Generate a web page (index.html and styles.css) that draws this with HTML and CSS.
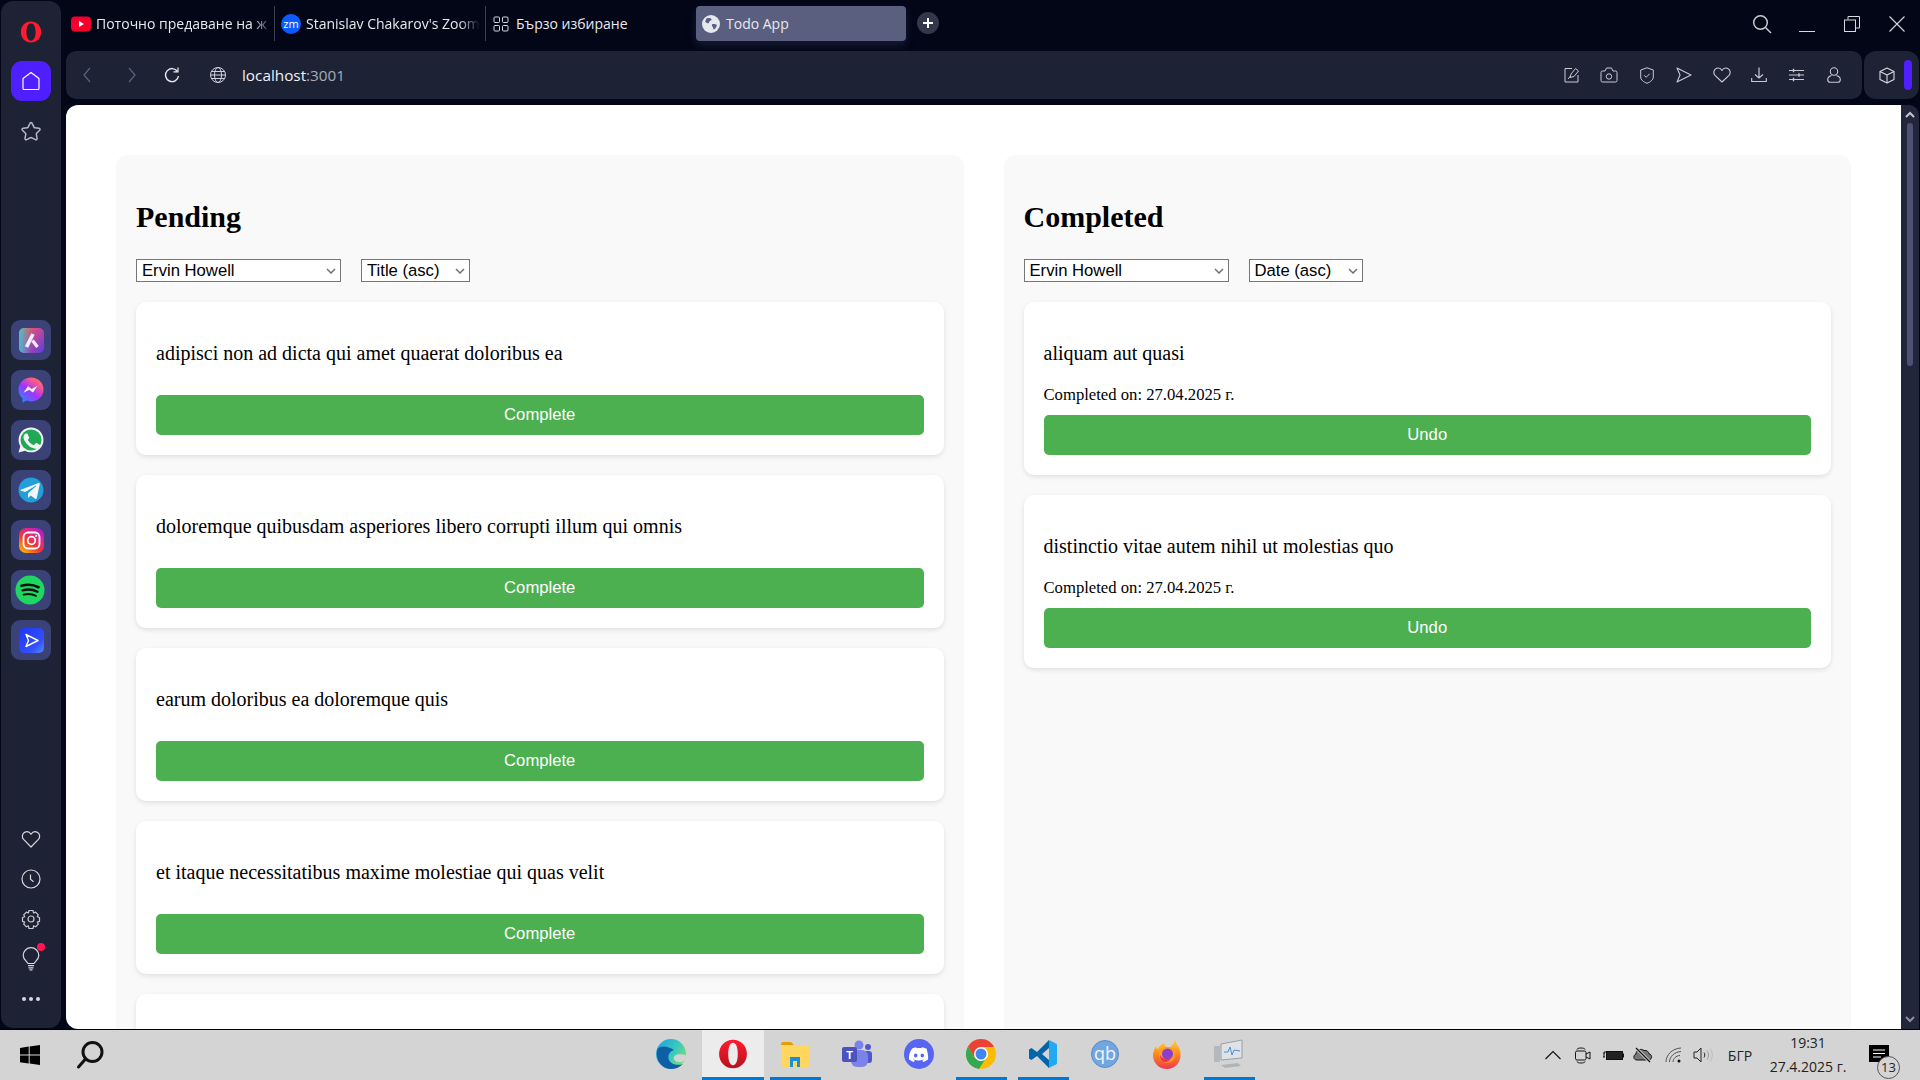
FILE: index.html
```html
<!DOCTYPE html>
<html lang="en">
<head>
    <meta charset="UTF-8">
    <meta name="viewport" content="width=device-width, initial-scale=1.0">
    <title>Todo App</title>
    <link rel="stylesheet" href="styles.css">
</head>
<body>
    <svg class="defs" width="0" height="0">
        <defs>
            <linearGradient id="grad-aria" x1="0" y1="0" x2="1" y2="1">
                <stop offset="0" stop-color="#f0703a"/>
                <stop offset="0.45" stop-color="#c0479a"/>
                <stop offset="1" stop-color="#5a3fe0"/>
            </linearGradient>
            <linearGradient id="grad-aria2" x1="0" y1="0" x2="1" y2="0">
                <stop offset="0" stop-color="#38c6d8" stop-opacity="0.9"/>
                <stop offset="0.5" stop-color="#38c6d8" stop-opacity="0"/>
            </linearGradient>
            <linearGradient id="grad-msg" x1="0.1" y1="1" x2="0.9" y2="0">
                <stop offset="0" stop-color="#1e90ff"/>
                <stop offset="0.45" stop-color="#a033ff"/>
                <stop offset="0.8" stop-color="#ff5c87"/>
                <stop offset="1" stop-color="#ff7a5c"/>
            </linearGradient>
            <linearGradient id="grad-insta" x1="0.1" y1="1" x2="0.9" y2="0">
                <stop offset="0" stop-color="#ffc107"/>
                <stop offset="0.4" stop-color="#f5372f"/>
                <stop offset="0.75" stop-color="#d6249f"/>
                <stop offset="1" stop-color="#9b1fd0"/>
            </linearGradient>
            <linearGradient id="grad-player" x1="0" y1="0" x2="1" y2="1">
                <stop offset="0" stop-color="#1d35f0"/>
                <stop offset="0.7" stop-color="#3350ff"/>
                <stop offset="1" stop-color="#5a8cf0"/>
            </linearGradient>
            <linearGradient id="grad-edge" x1="0" y1="0" x2="1" y2="0.6">
                <stop offset="0" stop-color="#1f9fe0"/>
                <stop offset="0.6" stop-color="#36c8c0"/>
                <stop offset="1" stop-color="#7ade78"/>
            </linearGradient>
            <linearGradient id="grad-opera" x1="0" y1="0" x2="0" y2="1">
                <stop offset="0" stop-color="#ff1b2d"/>
                <stop offset="1" stop-color="#b5121f"/>
            </linearGradient>
            <linearGradient id="grad-fox" x1="0.5" y1="0" x2="0.5" y2="1">
                <stop offset="0" stop-color="#ffd43b"/>
                <stop offset="0.5" stop-color="#ff8a1e"/>
                <stop offset="1" stop-color="#f0364e"/>
            </linearGradient>
        </defs>
    </svg>

    <div class="browser">
        <aside class="sidebar">
            <div class="side-logo">
                <svg width="22" height="22" viewBox="0 0 22 22"><path fill="#ff1b2d" fill-rule="evenodd" d="M11 .5C5 .5.8 5.200.8 11S5 21.500 11 21.500 21.200 16.800 21.200 11 17 .5 11 .5zm0 1.700c2.800 0 4.600 4 4.600 8.800s-1.800 8.800-4.600 8.800-4.600-4-4.600-8.800S8.200 2.200 11 2.200z"/></svg>
            </div>
            <div class="side-home">
                <svg width="20" height="20" viewBox="0 0 20 20" fill="none" stroke="#fff" stroke-width="1.200"><path d="M10 1.500 18 7.500V17.500a1 1 0 0 1-1 1H3a1 1 0 0 1-1-1V7.500z" stroke-linejoin="round"/></svg>
            </div>
            <div class="side-slot">
                <svg width="22" height="22" viewBox="0 0 22 22" fill="none" stroke="#b4b8c6" stroke-width="1.500" stroke-linejoin="round"><path d="M11 2.500c.5 0 .9.300 1.100.800l1.900 3.900c.1.300.4.500.700.500l4.300.6c1 .2 1.400 1.300.7 2l-3.100 3c-.2.200-.3.500-.3.800l.8 4.300c.2 1-.9 1.700-1.700 1.300l-3.900-2c-.3-.1-.6-.1-.9 0l-3.900 2c-.8.400-1.900-.3-1.700-1.300l.8-4.300c0-.3-.1-.6-.3-.8l-3.100-3c-.7-.7-.3-1.800.7-2l4.300-.6c.3 0 .6-.2.700-.5l1.900-3.900c.2-.5.600-.8 1.100-.8z"/></svg>
            </div>

            <div class="side-apps">
                <div class="app-tile">
                    <svg width="25" height="25" viewBox="0 0 25 25"><rect width="25" height="25" rx="5" fill="url(#grad-aria)"/><rect width="25" height="25" rx="5" fill="url(#grad-aria2)"/><path d="M14 6 7.500 19" stroke="#eef" stroke-width="3.600" fill="none"/><path d="M13.500 12.500 18.500 19" stroke="#eef" stroke-width="3.200" fill="none"/></svg>
                </div>
                <div class="app-tile">
                    <svg width="26" height="26" viewBox="0 0 26 26"><path fill="url(#grad-msg)" d="M13 .5C6 .5.5 5.600.5 12.500c0 3.700 1.500 6.800 4 9v4.200l3.900-2.100c1.400.5 3 .8 4.600.8 7 0 12.500-5.100 12.500-11.900S20 .5 13 .5z"/><path fill="#fff" d="M5.500 15.800 10 9.200l3.600 2.700 5.800-2.900-4.500 6.500-3.600-2.700z"/></svg>
                </div>
                <div class="app-tile">
                    <svg width="26" height="26" viewBox="0 0 26 26"><path fill="#f2f4f4" d="M13 .5C6.100.5.600 6 .600 12.900c0 2.300.6 4.400 1.700 6.300L.5 25.500l6.500-1.700c1.800 1 3.900 1.500 6 1.500 6.900 0 12.500-5.500 12.500-12.400S19.900.5 13 .5z"/><circle cx="13" cy="13" r="10.500" fill="#1fa855"/><path fill="#f2f4f4" d="M9.700 7.300c-.3-.7-.6-.7-.9-.7h-.8c-.3 0-.7.100-1.100.5-.4.400-1.400 1.400-1.400 3.400s1.500 3.900 1.700 4.200c.2.300 2.800 4.500 7 6.100 3.400 1.300 4.100.9 4.900.9.700-.1 2.400-1 2.700-1.900.3-.9.300-1.700.2-1.900-.1-.2-.4-.3-.8-.5l-2.700-1.300c-.4-.1-.6-.2-.9.200l-1.300 1.500c-.2.300-.5.300-.9.100-.4-.2-1.700-.6-3.200-2-1.200-1-2-2.300-2.200-2.700-.2-.4 0-.6.200-.8l.6-.7c.2-.2.200-.4.400-.6.100-.3.100-.5 0-.7z"/></svg>
                </div>
                <div class="app-tile">
                    <svg width="26" height="26" viewBox="0 0 26 26"><circle cx="13" cy="13" r="12.500" fill="#229ed9"/><path fill="#f2f6fa" d="M3.500 12.600 20.500 6c.8-.3 1.500.2 1.200 1.400l-2.900 13.500c-.2 1-.8 1.200-1.600.8l-4.400-3.300-2.100 2c-.3.300-.5.400-.9.400l.3-4.500 8.200-7.400c.4-.3-.1-.5-.6-.2L7.200 15l-4.300-1.300c-.9-.3-.9-.9.600-1.100z"/></svg>
                </div>
                <div class="app-tile">
                    <svg width="25" height="25" viewBox="0 0 25 25"><rect width="25" height="25" rx="7" fill="url(#grad-insta)"/><rect x="4.500" y="4.500" width="16" height="16" rx="4.500" fill="none" stroke="#fff" stroke-width="1.800"/><circle cx="12.500" cy="12.500" r="3.800" fill="none" stroke="#fff" stroke-width="1.800"/><circle cx="17.200" cy="7.800" r="1.100" fill="#fff"/></svg>
                </div>
                <div class="app-tile">
                    <svg class="spotify" width="30" height="30" viewBox="0 0 30 30"><circle cx="15" cy="15" r="14.500" fill="#1ed760"/><g fill="none" stroke="#111" stroke-linecap="round"><path d="M6.500 10.800c5.500-1.600 12-1.200 17 1.400" stroke-width="2.700"/><path d="M7.500 15.300c5-1.300 10.500-.9 15 1.500" stroke-width="2.300"/><path d="M8.500 19.600c4.300-1 8.700-.7 12.500 1.300" stroke-width="1.900"/></g></svg>
                </div>
                <div class="app-tile">
                    <svg width="25" height="25" viewBox="0 0 25 25"><rect width="25" height="25" rx="5" fill="url(#grad-player)"/><path d="M7 6.500 19 12.500 7 18.500 9.500 12.500z" fill="none" stroke="#fff" stroke-width="1.400" stroke-linejoin="round"/></svg>
                </div>
            </div>

            <div class="side-bottom">
                <div class="side-slot">
                    <svg width="20" height="20" viewBox="0 0 20 20" fill="none" stroke="#d6d8e0" stroke-width="1.200"><path d="M10 18 2.600 10.400C.4 8 1.200 4.200 4 3.100 6.300 2.200 8.700 3.200 10 5.300 11.300 3.200 13.700 2.200 16 3.100c2.800 1.100 3.600 4.900 1.400 7.300z" stroke-linejoin="round"/></svg>
                </div>
                <div class="side-slot">
                    <svg width="20" height="20" viewBox="0 0 20 20" fill="none" stroke="#d6d8e0" stroke-width="1.200"><circle cx="10" cy="10" r="9"/><path d="M9.500 5.500v4.700l3 2.600"/></svg>
                </div>
                <div class="side-slot">
                    <svg width="20" height="20" viewBox="0 0 20 20" fill="none" stroke="#c8cad4" stroke-width="1.200" stroke-linejoin="round"><path d="M8 1.500h4l.6 2.500 2-.9 2.700 2.700-1 2 2.200 .7v3.900l-2.200.7 1 2-2.700 2.700-2-1-.6 2.700H8l-.6-2.700-2 1-2.700-2.700 1-2-2.200-.7V8.500l2.200-.7-1-2 2.700-2.700 2 .9z"/><circle cx="10" cy="10" r="3"/></svg>
                </div>
                <div class="side-slot">
                    <span class="bulb">
                        <svg width="18" height="24" viewBox="0 0 18 24" fill="none" stroke="#d6d8e0" stroke-width="1.200"><path d="M6 16.500c-.5-2-4.800-3.500-4.800-8a7.800 7.800 0 0 1 15.600 0c0 4.500-4.300 6-4.800 8z"/><path d="M6 18.700h6M6.500 20.800h5M7.500 22.800h3"/></svg>
                        <i class="bulb-dot"></i>
                    </span>
                </div>
                <div class="side-slot side-dots"><i></i><i></i><i></i></div>
            </div>
        </aside>

        <div class="window">
            <div class="tabs">
                <div class="tab tab-yt">
                    <svg width="20" height="16" viewBox="0 0 20 16"><rect width="20" height="15" y=".5" rx="4" fill="#f5002d"/><path d="M8 5v6l5-3z" fill="#fff"/></svg>
                    <span class="tab-text">Поточно предаване на ж</span>
                </div>
                <div class="tab tab-zoom">
                    <span class="zm-icon">zm</span>
                    <span class="tab-text">Stanislav Chakarov's Zoom</span>
                </div>
                <div class="tab tab-speed">
                    <svg width="16" height="16" viewBox="0 0 16 16" fill="none" stroke="#d8dae2" stroke-width="1"><rect x="1" y="1" width="5.500" height="5.500" rx="1"/><rect x="9.500" y="1" width="5.500" height="5.500" rx="1"/><rect x="1" y="9.500" width="5.500" height="5.500" rx="1"/><rect x="9.500" y="9.500" width="5.500" height="5.500" rx="1"/></svg>
                    <span>Бързо избиране</span>
                </div>
                <div class="tab tab-active">
                    <svg width="18" height="18" viewBox="0 0 18 18"><circle cx="9" cy="9" r="9" fill="#e6e8ef"/><path fill="#5b6080" d="M4.500 3.500c2-.8 4-.3 5 .5.500 1-.8 1.800-1.800 2.300-.9.600-.3 1.700-1.300 2-1 .2-2.300-.5-3.200-1.500.3-1.200.8-2.300 1.300-3.300zM10.500 9c1.500-.2 3.500.2 4.300 1-.2 2-1.300 3.600-3 4.600-.8-.8-.5-2-1.200-2.800C9.800 11 9.500 9.500 10.500 9z"/></svg>
                    <span>Todo App</span>
                </div>
                <div class="tab-add">
                    <svg width="12" height="12" viewBox="0 0 12 12"><path d="M6 1v10M1 6h10" stroke="#fff" stroke-width="2"/></svg>
                </div>
                <div class="window-controls">
                    <span class="win-btn win-search">
                        <svg width="20" height="20" viewBox="0 0 20 20" fill="none" stroke="#c8cad0" stroke-width="1.500"><circle cx="8.500" cy="8.500" r="6.800"/><path d="M13.500 13.500 19 19"/></svg>
                    </span>
                    <span class="win-btn">
                        <svg width="16" height="16" viewBox="0 0 16 16" stroke="#d8dae0"><path d="M0 15.500h16"/></svg>
                    </span>
                    <span class="win-btn">
                        <svg width="16" height="16" viewBox="0 0 16 16" fill="none" stroke="#d8dae0"><rect x=".5" y="4" width="11" height="11.500"/><path d="M4 3.500V.5h11.500V12H12"/></svg>
                    </span>
                    <span class="win-btn">
                        <svg width="16" height="16" viewBox="0 0 16 16" stroke="#d8dae0" stroke-width="1.100"><path d="M.5.5l15 15M15.500.5l-15 15"/></svg>
                    </span>
                </div>
            </div>

            <div class="toolbar">
                <div class="address">
                    <span class="nav-btn nav-back">
                        <svg width="10" height="16" viewBox="0 0 10 16" fill="none" stroke="#5c6378" stroke-width="1.200"><path d="M8 1 2 8l6 7"/></svg>
                    </span>
                    <span class="nav-btn nav-forward">
                        <svg width="10" height="16" viewBox="0 0 10 16" fill="none" stroke="#5c6378" stroke-width="1.200"><path d="M2 1l6 7-6 7"/></svg>
                    </span>
                    <span class="nav-btn nav-reload">
                        <svg width="16" height="16" viewBox="0 0 16 16" fill="none" stroke="#e8e9ee" stroke-width="1.400"><path d="M13.500 4.500A6.500 6.500 0 1 0 14.500 9"/><path d="M9.500 4.800h4.500V.5" stroke-width="1.200"/></svg>
                    </span>
                    <span class="nav-btn nav-globe">
                        <svg width="16" height="16" viewBox="0 0 16 16" fill="none" stroke="#cfd1da" stroke-width="1"><circle cx="8" cy="8" r="7.500"/><ellipse cx="8" cy="8" rx="3.500" ry="7.500"/><path d="M.5 8h15M1.500 4.500h13M1.500 11.500h13"/></svg>
                    </span>
                    <span class="url">localhost<span class="url-port">:3001</span></span>
                    <div class="page-actions">
                        <span class="act">
                            <svg width="16" height="16" viewBox="0 0 16 16" fill="none" stroke="#c8cad4" stroke-width="1"><path d="M8 1.500H1v13.500h13V8"/><path d="M6 10.500 7 7l4.500-5.500 3 2.500L10 9.500z" stroke-linejoin="round"/><path d="M6.500 9 4 12"/></svg>
                        </span>
                        <span class="act">
                            <svg width="18" height="16" viewBox="0 0 18 16" fill="none" stroke="#c8cad4" stroke-width="1"><path d="M1 5.500a1.500 1.500 0 0 1 1.500-1.500H5l1.500-3h5L13 4h2.500A1.500 1.500 0 0 1 17 5.500v8a1.500 1.500 0 0 1-1.500 1.500h-13A1.500 1.500 0 0 1 1 13.500z"/><circle cx="9" cy="9.500" r="2.700"/></svg>
                        </span>
                        <span class="act">
                            <svg width="14" height="17" viewBox="0 0 14 17" fill="none" stroke="#c8cad4" stroke-width="1"><path d="M7 .8 13.300 3v7c0 3-3 5-6.300 6.300C3.700 15 .7 13 .7 10V3z" stroke-linejoin="round"/><path d="M4.200 8.300l2 2 3.600-3.600"/></svg>
                        </span>
                        <span class="act">
                            <svg width="16" height="16" viewBox="0 0 16 16" fill="none" stroke="#c8cad4" stroke-width="1.100" stroke-linejoin="round"><path d="M1 1 15 8 1 15 4 8z"/></svg>
                        </span>
                        <span class="act">
                            <svg width="18" height="16" viewBox="0 0 18 16" fill="none" stroke="#c8cad4" stroke-width="1.100" stroke-linejoin="round"><path d="M9 15 2 8.300C-.2 5.800 1 2 3.700 1.200 5.800.6 8 1.500 9 3.500 10 1.500 12.200.6 14.300 1.200 17 2 18.200 5.800 16 8.300z"/></svg>
                        </span>
                        <span class="act">
                            <svg width="16" height="16" viewBox="0 0 16 16" fill="none" stroke="#c8cad4" stroke-width="1.200"><path d="M8 .5v10.500M4 7.500 8 11l4-3.500"/><path d="M.7 11v3.500h14.600V11" stroke-width="1.100"/></svg>
                        </span>
                        <span class="act">
                            <svg width="15" height="14" viewBox="0 0 15 14" fill="none" stroke="#c8cad4" stroke-width="1.100"><path d="M0 2.500h15M0 7h15M0 11.500h15"/><path d="M4.500 .7v3.600M10 5.200v3.600M4.500 9.700v3.600" stroke-width="1.400"/></svg>
                        </span>
                        <span class="act">
                            <svg width="14" height="16" viewBox="0 0 14 16" fill="none" stroke="#c8cad4" stroke-width="1.100"><circle cx="7" cy="4.500" r="3.700"/><path d="M4.500 8.500C2 9.300.7 10.800.7 12.500c0 1.500 1 2.800 2.500 2.800h7.600c1.500 0 2.500-1.300 2.500-2.800 0-1.700-1.300-3.200-3.800-4"/></svg>
                        </span>
                    </div>
                </div>
                <div class="box-btn">
                    <svg width="16" height="17" viewBox="0 0 16 17" fill="none" stroke="#d8dae2" stroke-width="1.100" stroke-linejoin="round"><path d="M8 1 15 4.500v8L8 16 1 12.500v-8z"/><path d="M1 4.500 8 8l7-3.500M8 8v8"/></svg>
                    <i class="box-bar"></i>
                </div>
            </div>

            <div class="viewport">
                <main class="page">
                    <div class="todo-grid">
                        <section class="column">
                            <h2>Pending</h2>
                            <div class="filters">
                                <select class="user-select"><option>Ervin Howell</option></select>
                                <select class="sort-title"><option>Title (asc)</option></select>
                            </div>
                            <div class="card">
                                <p>adipisci non ad dicta qui amet quaerat doloribus ea</p>
                                <button>Complete</button>
                            </div>
                            <div class="card">
                                <p>doloremque quibusdam asperiores libero corrupti illum qui omnis</p>
                                <button>Complete</button>
                            </div>
                            <div class="card">
                                <p>earum doloribus ea doloremque quis</p>
                                <button>Complete</button>
                            </div>
                            <div class="card">
                                <p>et itaque necessitatibus maxime molestiae qui quas velit</p>
                                <button>Complete</button>
                            </div>
                            <!-- next card is below the fold, only its top edge shows -->
                            <div class="card card-next"></div>
                        </section>
                        <section class="column">
                            <h2>Completed</h2>
                            <div class="filters">
                                <select class="user-select"><option>Ervin Howell</option></select>
                                <select class="sort-date"><option>Date (asc)</option></select>
                            </div>
                            <div class="card">
                                <p class="has-date">aliquam aut quasi</p>
                                <p class="done-date">Completed on: 27.04.2025 г.</p>
                                <button>Undo</button>
                            </div>
                            <div class="card">
                                <p class="has-date">distinctio vitae autem nihil ut molestias quo</p>
                                <p class="done-date">Completed on: 27.04.2025 г.</p>
                                <button>Undo</button>
                            </div>
                        </section>
                    </div>
                </main>
                <div class="scrollbar">
                    <svg width="10" height="7" viewBox="0 0 10 7" fill="none" stroke="#c4c6d2" stroke-width="2"><path d="M1 6l4-4 4 4"/></svg>
                    <div class="scroll-track"><div class="scroll-thumb"></div></div>
                    <svg width="10" height="7" viewBox="0 0 10 7" fill="none" stroke="#8d90a2" stroke-width="2"><path d="M1 1l4 4 4-4"/></svg>
                </div>
            </div>
        </div>
    </div>

    <footer class="taskbar">
        <div class="task-start">
            <svg width="20" height="20" viewBox="0 0 20 20" fill="#000"><path d="M0 2.900 8.700 1.600v8H0zM9.700 1.500 20 0v9.600H9.700zM0 10.500h8.700v8L0 17.200zM9.700 10.500H20V20L9.700 18.600z"/></svg>
        </div>
        <div class="task-search">
            <svg width="28" height="30" viewBox="0 0 28 30" fill="none" stroke="#111" stroke-width="3"><circle cx="16.500" cy="12" r="9.500"/><path d="M9.500 19 2.500 27" stroke-linecap="round"/></svg>
        </div>

        <div class="task-apps">
            <span class="task-app app-edge">
                <svg width="30" height="30" viewBox="0 0 30 30"><circle cx="15" cy="15" r="15" fill="url(#grad-edge)"/><path fill="#0f5fa8" d="M1.500 10C-1.500 21 6 30 15 30c5 0 9-2 12-5-5 2-12 .5-14-4-2-5 1-9 5-10-6-4-13-5-16.500-1z"/><path fill="#d4d4d4" d="M30 16.500c-3-1.500-9-2-11.500.5-2 2.500 0 5.500 3.500 6 3 .4 5-.3 6.500-1.500 1-1.500 1.300-3.200 1.500-5z"/></svg>
            </span>
            <span class="task-app app-opera">
                <svg width="30" height="30" viewBox="0 0 22 22"><path fill="url(#grad-opera)" fill-rule="evenodd" d="M11 .5C5 .5.8 5.200.8 11S5 21.500 11 21.500 21.200 16.800 21.200 11 17 .5 11 .5zm0 2.300c2.400 0 3.500 3.700 3.500 8.200s-1.100 8.200-3.500 8.200-3.500-3.700-3.500-8.200S8.600 2.800 11 2.800z"/></svg>
            </span>
            <span class="task-app running">
                <svg width="28" height="28" viewBox="0 0 28 28"><path d="M0 4a2 2 0 0 1 2-2h8l3 3H0z" fill="#e0a100"/><rect y="5" width="28" height="22" rx="2" fill="#ffd75e"/><path d="M9 27V17h10v10h-3v-6h-4v6z" fill="#1d8fd8"/></svg>
            </span>
            <span class="task-app">
                <svg width="30" height="30" viewBox="0 0 30 30"><circle cx="17" cy="6" r="4.500" fill="#7b83eb"/><circle cx="26" cy="8" r="3" fill="#5059c9"/><rect x="21" y="12" width="9" height="12" rx="3" fill="#5059c9"/><rect x="9" y="11" width="17" height="17" rx="6" fill="#7b83eb"/><rect y="8" width="15" height="15" rx="2" fill="#4b53bc"/><text x="7.500" y="20" class="teams-t">T</text></svg>
            </span>
            <span class="task-app">
                <svg width="30" height="30" viewBox="0 0 30 30"><circle cx="15" cy="15" r="15" fill="#5865f2"/><path fill="#fff" d="M22 9.500a16 16 0 0 0-4-1.300l-.5 1c-1.600-.2-3.200-.2-4.900 0l-.5-1a16 16 0 0 0-4 1.300C5.400 13.300 4.700 17 5 20.600c1.700 1.200 3.300 2 4.900 2.500l1-1.600c-.6-.2-1.100-.5-1.600-.8l.4-.3c3.200 1.500 6.600 1.500 9.700 0l.4.300c-.5.300-1 .6-1.600.8l1 1.600c1.600-.5 3.300-1.300 4.900-2.500.4-4.200-.7-7.800-1.600-11.100zM11.700 18.500c-1 0-1.700-.9-1.700-2s.8-2 1.700-2c1 0 1.800.9 1.700 2 0 1.100-.7 2-1.700 2zm6.600 0c-1 0-1.700-.9-1.700-2s.8-2 1.700-2c1 0 1.800.9 1.700 2 0 1.100-.7 2-1.700 2z"/></svg>
            </span>
            <span class="task-app running">
                <svg width="30" height="30" viewBox="0 0 30 30"><circle cx="15" cy="15" r="15" fill="#fbbc04"/><path d="M15 0a15 15 0 0 0-13 7.500L8 18 15 8h13A15 15 0 0 0 15 0z" fill="#ea4335"/><path d="M2 7.500A15 15 0 0 0 13 30l6-9.500-11-2.500z" fill="#34a853"/><circle cx="15" cy="15" r="7" fill="#fff"/><circle cx="15" cy="15" r="5.500" fill="#4285f4"/></svg>
            </span>
            <span class="task-app running">
                <svg width="30" height="30" viewBox="0 0 30 30"><path fill="#0065a9" d="M21 1 9 13 3.500 9 1 10.500v9L3.500 21 9 17l12 12 0-8-7-6 7-6z"/><path fill="#23a9f2" d="M21 1l7 3.500a2 2 0 0 1 1 1.500v18a2 2 0 0 1-1 1.500L21 29z"/></svg>
            </span>
            <span class="task-app">
                <svg width="28" height="28" viewBox="0 0 28 28"><circle cx="14" cy="14" r="13.500" fill="#72a6e0" stroke="#5a8cc8"/><text x="14" y="20" class="qb-text">qb</text></svg>
            </span>
            <span class="task-app">
                <svg width="28" height="30" viewBox="0 0 28 30"><path fill="url(#grad-fox)" d="M22 0c1 3 1 5 3 7 3 5 3 10 2 13-1.500 6-7 10-13 10C6 30 0 24 0 16 0 12 2 9 3 7c0 2 1 3 2 3 1-3 4-5 7-6-1 2 0 3 2 4 3 .5 6 0 8-8z"/><circle cx="14" cy="16" r="8" fill="#ff9a24"/><circle cx="14.500" cy="15" r="5.500" fill="#8a3fd0"/><path fill="#f0364e" d="M7 16c2 4 7 5 11 3-2 3.500-4.500 4.500-7 4-2.500-.5-4-3.500-4-7z"/></svg>
            </span>
            <span class="task-app running">
                <svg width="32" height="30" viewBox="0 0 32 30"><path d="M8 5 29 1v18L8 21z" fill="#dfe3e8" stroke="#9aa0a6"/><path d="M11 13h4l2-5 2 8 2-5 6 1" fill="none" stroke="#4a8fd0"/><rect x="1" y="7" width="6" height="16" fill="#b4b8bc"/><path d="M8 26l17-2 3 3-16 2z" fill="#b0b4b8"/></svg>
            </span>
        </div>

        <div class="tray">
            <span class="tray-item">
                <svg width="16" height="10" viewBox="0 0 16 10" fill="none" stroke="#111" stroke-width="1.100"><path d="M.5 9 8 1.500 15.500 9"/></svg>
            </span>
            <span class="tray-item">
                <svg width="16" height="19" viewBox="0 0 16 19" fill="none" stroke="#111" stroke-width="1"><path d="M2 3.500C2 1.500 10 1.500 10 3.500M2 15.500c0 2 8 2 8 0"/><rect x=".5" y="5" width="10.500" height="9" rx="1.500"/><path d="M11 8l4-2v7l-4-2"/></svg>
            </span>
            <span class="tray-item">
                <svg width="21" height="12" viewBox="0 0 21 12"><path d="M0 4h2V2M1 4v4M0 8h2" fill="none" stroke="#111"/><rect x="3.500" y="2.500" width="16" height="8" fill="#222" stroke="#111"/><rect x="20" y="4.500" width="1" height="4" fill="#111"/></svg>
            </span>
            <span class="tray-item">
                <svg width="20" height="16" viewBox="0 0 20 16"><path d="M4 13c-4 0-4-5-1-6C3 3 8 1 11 3.500c3-.5 5 1.500 5 3.500 3 0 4 5 0 6z" fill="#777" stroke="#111"/><path d="M3 1l14 14" stroke="#d4d4d4" stroke-width="3"/><path d="M3 1l14 14" stroke="#111" stroke-width="1.200"/></svg>
            </span>
            <span class="tray-item">
                <svg width="17" height="16" viewBox="0 0 17 16" fill="none" stroke="#555"><path d="M1 15C1 8 7 1.500 16 1"/><path d="M4.500 15C4.500 10 9 5 16 4.500"/><path d="M8 15c0-3 3-6.500 7-6.500"/><circle cx="14" cy="14" r="1.500" fill="#111" stroke="none"/></svg>
            </span>
            <span class="tray-item">
                <svg width="21" height="16" viewBox="0 0 21 16" fill="none" stroke="#222"><path d="M1 5h3l4-4v14l-4-4H1z"/><path d="M11 5.500c1 1.500 1 3.500 0 5"/><path d="M14 3.500c2 2.500 2 6.500 0 9" stroke="#999"/><path d="M17 1.500c3 3.500 3 9.500 0 13" stroke="#bbb"/></svg>
            </span>
            <span class="tray-lang">БГР</span>
            <div class="clock">
                <span>19:31</span>
                <span>27.4.2025 г.</span>
            </div>
            <div class="notify">
                <svg width="20" height="17" viewBox="0 0 20 17"><path d="M0 0h20v17H0z" fill="#000"/><path d="M4 5h12M4 8.500h12M4 12h8" stroke="#fff"/></svg>
                <span class="notify-count">13</span>
            </div>
        </div>
    </footer>
</body>
</html>
```
FILE: styles.css
```css
* {
    box-sizing: border-box;
}
html, body {
    margin: 0;
    height: 1080px;
    overflow: hidden;
}
body {
    background: #020617;
    font-family: "Open Sans", "Noto Sans", sans-serif;
    color: #e8e9ee;
}
.defs {
    display: block;
    height: 0;
}
svg {
    display: block;
    flex: none;
}

/* browser frame */
.browser {
    display: flex;
    height: 1029px;
}
.sidebar {
    width: 60px;
    height: 1027px;
    margin: 1px 5px 0 1px;
    padding-top: 20px;
    background: #1e2235;
    border-radius: 12px;
    display: flex;
    flex-direction: column;
    align-items: center;
}
.side-logo {
    height: 22px;
    margin-bottom: 18px;
}
.side-home {
    width: 40px;
    height: 40px;
    background: #4f1fff;
    border-radius: 11px;
    display: flex;
    align-items: center;
    justify-content: center;
    margin-bottom: 10px;
}
.side-slot {
    height: 40px;
    width: 40px;
    display: flex;
    align-items: center;
    justify-content: center;
}
.side-apps {
    margin-top: 169px;
    display: flex;
    flex-direction: column;
    gap: 10px;
}
.app-tile {
    width: 40px;
    height: 40px;
    background: #3a4278;
    border-radius: 9px;
    display: flex;
    align-items: center;
    justify-content: center;
}
.spotify {
    margin-right: 2px;
}
.side-bottom {
    margin-top: auto;
    margin-bottom: 9px;
    display: flex;
    flex-direction: column;
}
.bulb {
    position: relative;
}
.bulb-dot {
    position: absolute;
    top: -4px;
    right: -5px;
    width: 8px;
    height: 8px;
    border-radius: 50%;
    background: #ff1654;
}
.side-dots {
    gap: 3px;
}
.side-dots i {
    width: 4px;
    height: 4px;
    border-radius: 50%;
    background: #d6d8e0;
}

.window {
    width: 1854px;
    display: flex;
    flex-direction: column;
}

/* tabs */
.tabs {
    height: 51px;
    padding-top: 6px;
    display: flex;
    align-items: flex-start;
    font-size: 14px;
}
.tab {
    height: 35px;
    display: flex;
    align-items: center;
    gap: 5px;
    white-space: nowrap;
}
.tab-text {
    overflow: hidden;
    flex: 1;
    -webkit-mask-image: linear-gradient(to right, #000 88%, transparent);
    mask-image: linear-gradient(to right, #000 88%, transparent);
}
.tab-yt {
    width: 209px;
    padding-left: 5px;
    border-right: 1px solid #3a3e50;
    margin-right: 6px;
}
.tab-zoom {
    width: 205px;
    border-right: 1px solid #3a3e50;
    margin-right: 7px;
    padding-right: 5px;
}
.zm-icon {
    width: 20px;
    height: 20px;
    border-radius: 50%;
    background: #0b5cff;
    color: #fff;
    font-size: 11px;
    line-height: 20px;
    text-align: center;
}
.tab-speed {
    width: 203px;
    gap: 7px;
}
.tab-active {
    width: 210px;
    background: #5a5f80;
    border-radius: 4px;
    padding-left: 6px;
    gap: 6px;
    box-shadow: 0 4px 10px rgba(90, 95, 128, 0.25);
}
.tab-add {
    width: 22px;
    height: 22px;
    margin: 6px 0 0 11px;
    border-radius: 50%;
    background: #33374a;
    display: flex;
    align-items: center;
    justify-content: center;
}
.window-controls {
    margin-left: auto;
    margin-right: 15px;
    height: 35px;
    display: flex;
    align-items: center;
    gap: 29px;
}
.win-btn {
    width: 16px;
    display: flex;
    justify-content: center;
}

/* address bar */
.toolbar {
    height: 48px;
    display: flex;
    gap: 2px;
    margin-bottom: 6px;
}
.address {
    width: 1796px;
    background: #1e2235;
    border-radius: 10px;
    display: flex;
    align-items: center;
    padding-left: 16px;
}
.nav-back {
    margin-right: 35px;
}
.nav-forward {
    margin-right: 27px;
}
.nav-reload {
    margin-right: 30px;
}
.nav-globe {
    margin-right: 16px;
}
.url {
    font-size: 15.300px;
    color: #f0f1f5;
}
.url-port {
    color: #a8abb8;
}
.page-actions {
    margin-left: auto;
    margin-right: 9px;
    display: flex;
    align-items: center;
}
.act {
    width: 37.500px;
    display: flex;
    justify-content: center;
}
.box-btn {
    width: 55px;
    background: #1e2235;
    border-radius: 12px;
    display: flex;
    align-items: center;
    padding-left: 15px;
    gap: 9px;
}
.box-bar {
    width: 8px;
    height: 30px;
    background: #4f1fff;
    border-radius: 4px;
}

/* page viewport */
.viewport {
    height: 924px;
    display: flex;
}
.page {
    flex: 1;
    background: #fff;
    border-radius: 12px 0 0 12px;
    padding: 50px 50px 0;
    overflow: hidden;
    color: #000;
    font-family: "Liberation Serif", "Times New Roman", serif;
    font-size: 20px;
}
.scrollbar {
    width: 18px;
    margin-right: 1px;
    background: #22263a;
    border-radius: 0 10px 0 0;
    padding: 6px 0 6px;
    display: flex;
    flex-direction: column;
    align-items: center;
}
.scroll-track {
    flex: 1;
    padding-top: 5px;
}
.scroll-thumb {
    width: 6px;
    height: 243px;
    background: #4e5272;
    border-radius: 3px;
}

/* todo columns */
.todo-grid {
    display: grid;
    grid-template-columns: 1fr 1fr;
    gap: 40px;
}
.column {
    background: #f9f9f9;
    border-radius: 12px;
    padding: 20px;
    min-height: 1200px;
}
h2 {
    font-size: 30px;
    margin: 25px 0;
    line-height: 34px;
}
.filters {
    display: flex;
    gap: 20px;
    margin-bottom: 20px;
}
select {
    appearance: none;
    -webkit-appearance: none;
    height: 23px;
    padding: 0 0 0 5px;
    font-family: "Liberation Sans", Arial, sans-serif;
    font-size: 16.670px;
    color: #000;
    border: 1px solid #767676;
    border-radius: 0;
    background: #fff url("data:image/svg+xml,%3Csvg xmlns='http://www.w3.org/2000/svg' width='10' height='6' viewBox='0 0 10 6'%3E%3Cpath d='M1 1l4 4 4-4' fill='none' stroke='%23707070' stroke-width='1.500'/%3E%3C/svg%3E") no-repeat right 4px center;
}
.user-select {
    width: 205px;
}
.sort-title {
    width: 109px;
}
.sort-date {
    width: 114px;
}
.card {
    background: #fff;
    border-radius: 10px;
    padding: 20px;
    margin-bottom: 20px;
    box-shadow: 0 2px 5px rgba(0, 0, 0, 0.1);
}
.card-next {
    height: 153px;
}
.card p {
    margin: 20px 0 30px;
    line-height: 23px;
}
.card p.has-date {
    margin-bottom: 20px;
}
.card p.done-date {
    margin: 0 0 10px;
    font-size: 16.670px;
    line-height: 20px;
}
button {
    display: block;
    width: 100%;
    height: 40px;
    border: none;
    border-radius: 5px;
    background: #4caf50;
    color: #fff;
    font-family: "Liberation Sans", Arial, sans-serif;
    font-size: 16.670px;
}

/* windows taskbar */
.taskbar {
    height: 51px;
    background: #d4d4d4;
    border-top: 1px solid #000;
    display: flex;
    color: #111;
}
.task-start {
    width: 62px;
    padding: 15px 0 0 20px;
}
.task-search {
    width: 578px;
    padding: 10px 0 0 14px;
}
.task-apps {
    display: flex;
    align-items: stretch;
}
.task-app {
    display: flex;
    align-items: center;
    justify-content: center;
    width: 62px;
    height: 50px;
    padding-bottom: 2px;
}
.task-app.running {
    background: linear-gradient(#0078d4, #0078d4) no-repeat bottom center / 51px 3px;
}
.app-opera {
    background: #ececec;
    box-shadow: inset 0 -3px #0078d4;
}
.teams-t {
    fill: #fff;
    font-family: "Liberation Sans", sans-serif;
    font-size: 11px;
    font-weight: 700;
    text-anchor: middle;
}
.qb-text {
    fill: #f0f4fa;
    font-family: "Open Sans", sans-serif;
    font-size: 18px;
    text-anchor: middle;
}
.tray {
    width: 382px;
    margin-left: auto;
    display: flex;
    align-items: center;
    font-size: 14px;
    color: #222;
}
.tray-item {
    width: 30px;
    display: flex;
    justify-content: center;
}
.tray-lang {
    width: 44px;
    text-align: center;
}
.clock {
    width: 92px;
    display: flex;
    flex-direction: column;
    align-items: center;
    line-height: 24px;
    font-size: 14px;
}
.notify {
    position: relative;
    width: 41px;
    padding-left: 15px;
    margin-top: -4px;
}
.notify-count {
    position: absolute;
    top: 11px;
    left: 23px;
    width: 23px;
    height: 23px;
    border-radius: 50%;
    border: 1px solid #555;
    background: #d4d4d4;
    font-size: 13px;
    line-height: 21px;
    text-align: center;
    color: #222;
}
```
